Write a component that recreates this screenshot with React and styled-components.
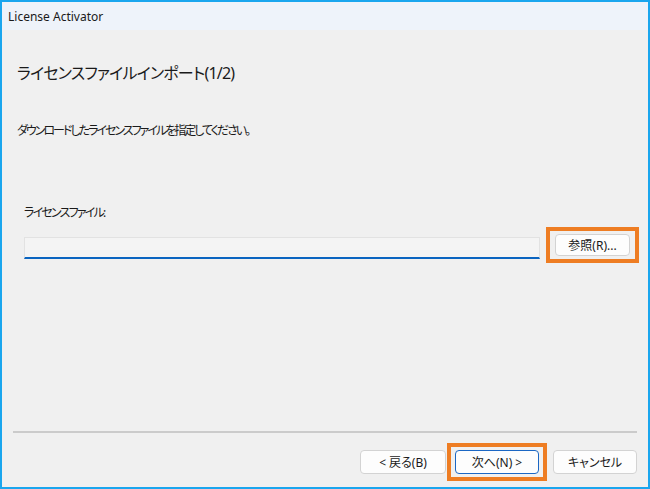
import React from 'react';
import styled, { createGlobalStyle } from 'styled-components';

const GlobalStyle = createGlobalStyle`
  html, body {
    margin: 0;
    padding: 0;
    background: #ffffff;
  }
  * {
    box-sizing: border-box;
  }
`;

const jpFont = `"Noto Sans", "Noto Sans CJK JP", sans-serif`;

const Window = styled.div`
  width: 650px;
  height: 489px;
  border: 2px solid #1aa6ee;
  display: flex;
  flex-direction: column;
  background: #f0f0f0;
  font-family: ${jpFont};
  font-feature-settings: 'palt';
  color: #1a1a1a;
`;

const TitleBar = styled.div`
  height: 28px;
  display: flex;
  align-items: center;
  padding-left: 6px;
  background: #eef3fa;
  font-size: 12px;
`;

const Content = styled.div`
  flex: 1;
  display: flex;
  flex-direction: column;
  padding: 0 9px 0 15px;
`;

const Heading = styled.h1`
  margin: 32px 0 0 0;
  font-size: 16px;
  line-height: 22px;
  font-weight: 400;
  letter-spacing: -0.8px;
`;

const Description = styled.p`
  margin: 39px 0 0 0;
  font-size: 12px;
  line-height: 16px;
  letter-spacing: -2px;
`;

const Label = styled.div`
  margin: 66px 0 0 7px;
  font-size: 12px;
  line-height: 16px;
  letter-spacing: -1.8px;
`;

const FileRow = styled.div`
  margin-top: 6px;
  margin-left: 7px;
  display: flex;
  align-items: flex-start;
  gap: 6px;
`;

const PathInput = styled.div`
  margin-top: 10px;
  width: 517px;
  height: 22px;
  background: #f4f4f4;
  border: 1px solid #e2e2e2;
  border-bottom: 2px solid #0a64c0;
`;

const Highlight = styled.div`
  display: flex;
  border: 4px solid #ee7d23;
  padding: ${p => p.pad};
`;

const Button = styled.button`
  width: ${p => p.w}px;
  height: ${p => p.h}px;
  padding: 0;
  border-radius: 4px;
  border: 1px solid ${p => (p.primary ? '#1b67c4' : '#d3d3d3')};
  background: #fdfdfd;
  font-family: ${jpFont};
  font-feature-settings: 'palt';
  font-size: 12px;
  color: #1a1a1a;
`;

const Spacer = styled.div`
  flex: 1;
`;

const Separator = styled.div`
  height: 2px;
  margin-left: -4px;
  margin-right: 2px;
  background: #cbcbcb;
`;

const ButtonRow = styled.div`
  margin: 10px 2px 6px 0;
  display: flex;
  justify-content: flex-end;
  align-items: flex-start;
`;

const Gap = styled.div`
  width: ${p => p.w}px;
`;

const Offset = styled.div`
  margin-top: 7px;
`;

export default function App() {
  return (
    <>
      <GlobalStyle />
      <Window>
        <TitleBar>License Activator</TitleBar>
        <Content>
          <Heading>ライセンスファイルインポート(1/2)</Heading>
          <Description>ダウンロードしたライセンスファイルを指定してください。</Description>
          <Label>ライセンスファイル:</Label>
          <FileRow>
            <PathInput />
            <Highlight pad='3px 5px'>
              <Button w={75} h={22}>参照(R)...</Button>
            </Highlight>
          </FileRow>
          <Spacer />
          <Separator />
          <ButtonRow>
            <Offset>
              <Button w={86} h={24}>&lt; 戻る(B)</Button>
            </Offset>
            <Gap w={1} />
            <Highlight pad='3px 4px'>
              <Button w={84} h={24} primary>次へ(N) &gt;</Button>
            </Highlight>
            <Gap w={6} />
            <Offset>
              <Button w={84} h={24}>キャンセル</Button>
            </Offset>
          </ButtonRow>
        </Content>
      </Window>
    </>
  );
}
